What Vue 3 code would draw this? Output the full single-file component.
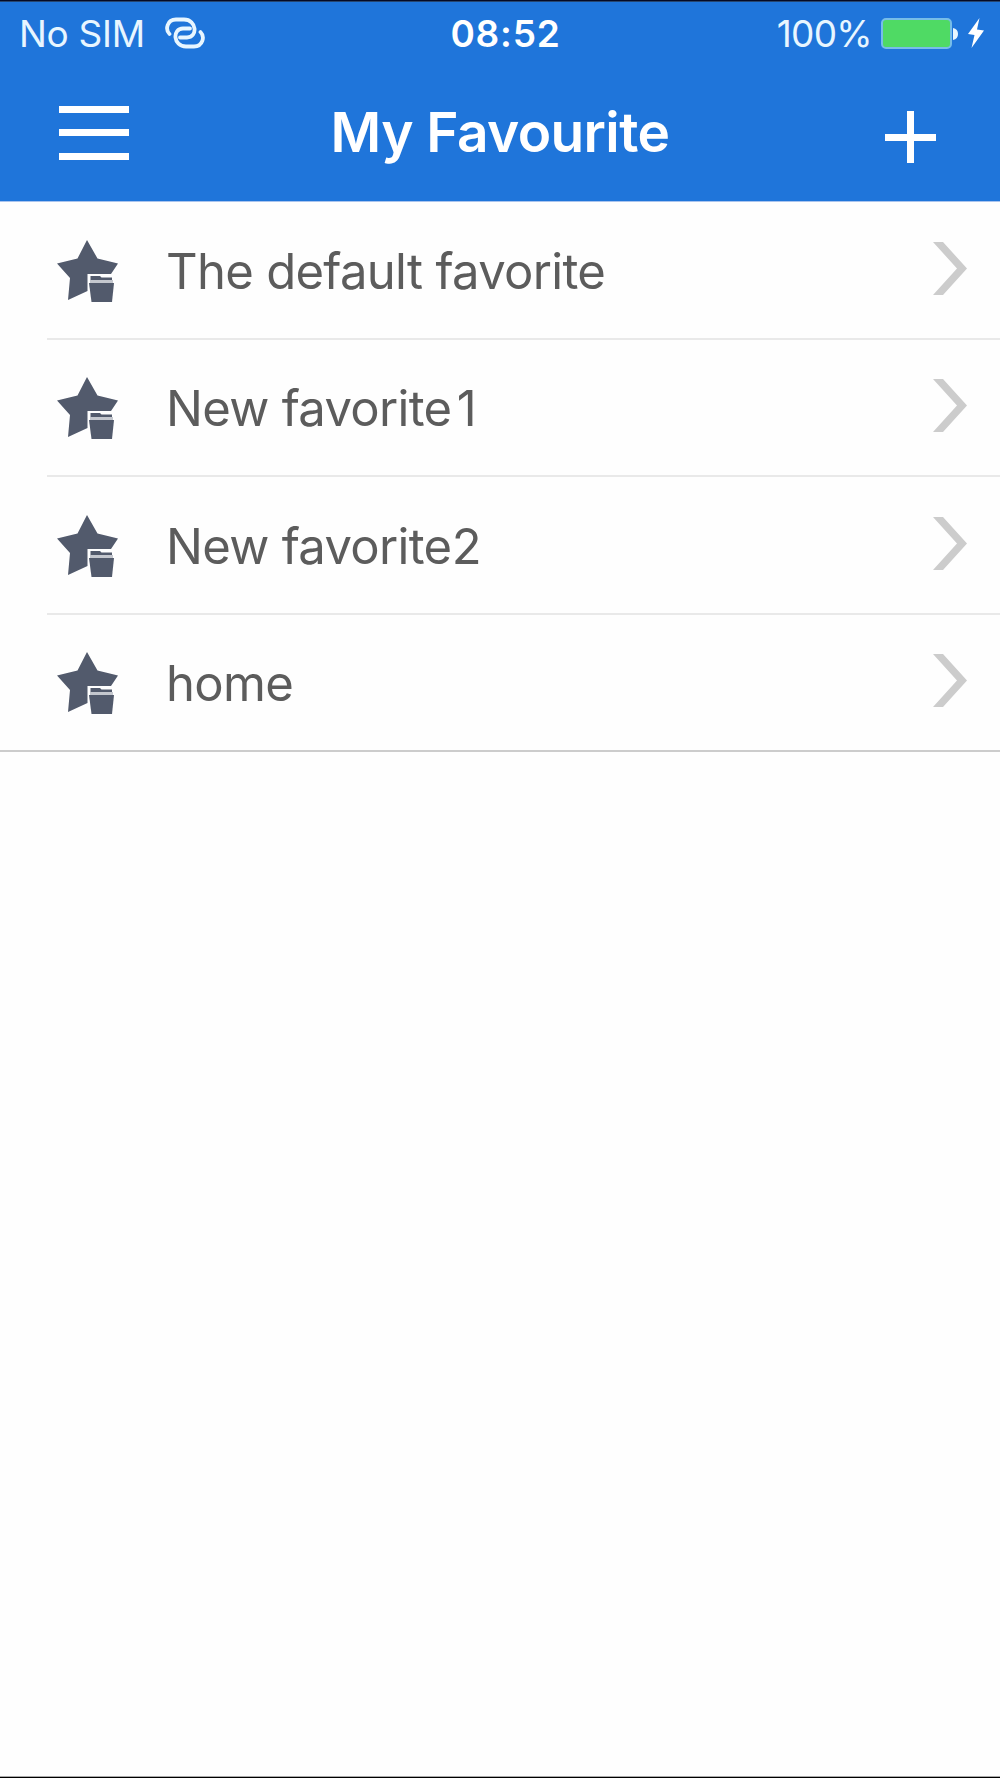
<template>
  <div class="phone">
    <header>
      <div class="status">
        <div class="carrier">
          <span class="sim">No SIM</span>
          <svg class="link" viewBox="0 0 40 32" width="40" height="32">
            <path d="M4.500 17 C0 12.500 2 2.500 11 2.500 H19 C32 2.500 33 20.500 22 20.500 H15" />
            <path d="M35.500 15 C40 19.500 38 29.500 29 29.500 H21 C8 29.500 7 11.500 18 11.500 H25" />
          </svg>
        </div>
        <span class="time">08:52</span>
        <div class="power">
          <span class="percent">100%</span>
          <span class="battery"></span>
          <svg class="knob" viewBox="0 0 5 12" width="5" height="12">
            <path d="M0 0 Q5 1 5 6 Q5 11 0 12 Z" />
          </svg>
          <svg class="bolt" viewBox="0 0 18 30" width="18" height="30">
            <path d="M12.500 0 L1 16 L7.500 17 L4.500 30 L17 12.500 L10 11.500 Z" />
          </svg>
        </div>
      </div>
      <nav>
        <button class="menu" aria-label="Menu">
          <i></i>
          <i></i>
          <i></i>
        </button>
        <h1>{{ title }}</h1>
        <button class="add" aria-label="Add">
          <svg viewBox="0 0 51 52" width="51" height="52">
            <path d="M22 0 H29 V23 H51 V30 H29 V52 H22 V30 H0 V23 H22 Z" />
          </svg>
        </button>
      </nav>
    </header>
    <ul>
      <li v-for="item in favorites" :key="item.name + item.number">
        <svg class="star" viewBox="0 0 62 62" width="62" height="62">
          <path d="M30 0 L40.500 18.500 L61 23.500 L54 34 H30.500 V51 L11 60 L13 38 L0 23.500 L20.500 18.500 Z" />
          <path d="M33.500 36 H43 L44.500 37.500 H55 V40 H33.500 Z" />
          <path class="rim" d="M33 40 H56 V43 H33 Z" />
          <path d="M32 43 H57 L55 62 H34.500 Z" />
        </svg>
        <span class="name">{{ item.name }}<span v-if="item.number" class="number">{{ item.number }}</span></span>
        <svg class="chevron" viewBox="0 0 34 54" width="34" height="54">
          <path d="M0 0 H10 L34 26.500 L10 53 H0 L24 26.500 Z" />
        </svg>
      </li>
    </ul>
  </div>
</template>

<script setup>
import { ref } from "vue";

const title = "My Favourite";
const favorites = ref([
  { name: "The default favorite" },
  { name: "New favorite", number: 1 },
  { name: "New favorite", number: 2 },
  { name: "home" },
]);
</script>

<style>
body {
  background-color: #fefefe;
}
</style>

<style scoped>
.phone {
  box-sizing: border-box;
  width: 1000px;
  height: 1778px;
  border-top: 1px solid #050a24;
  border-bottom: 1px solid #000;
  box-shadow: inset 0 -1px #aaa;
  font-family: Inter, "Liberation Sans", sans-serif;
  overflow: hidden;
}

header {
  box-sizing: border-box;
  height: 201px;
  background-color: #1f75da;
  border-top: 1px solid #25456f;
  border-bottom: 1px solid #a9c4ee;
  color: #fff;
}

.status {
  height: 64px;
  display: grid;
  grid-template-columns: 1fr auto 1fr;
  align-items: center;
  font-size: 37px;
  line-height: 64px;
  color: #e8f6ff;
}

.carrier {
  display: flex;
  align-items: center;
  padding-left: 19px;
}

.sim {
  width: 146px;
  letter-spacing: -0.3px;
}

.link {
  margin-bottom: 2px;
  fill: none;
  stroke: #e8f6ff;
  stroke-width: 3.8;
  stroke-linecap: round;
}

.time {
  font-weight: 600;
  letter-spacing: 0.8px;
  padding-left: 11px;
  color: #fff;
}

.power {
  display: flex;
  align-items: center;
  justify-content: flex-end;
  padding-right: 15px;
}

.percent {
  margin-right: 9px;
  letter-spacing: -0.7px;
}

.battery {
  box-sizing: border-box;
  width: 71px;
  height: 31px;
  margin-bottom: 1px;
  border: 2px solid #77bde8;
  border-radius: 5px;
  background-color: #4fda64;
}

.knob {
  margin-left: 1px;
  margin-right: 9px;
  fill: #e8f6ff;
}

.bolt {
  margin-bottom: 2px;
  fill: #fff;
}

nav {
  height: 133px;
  display: grid;
  grid-template-columns: 1fr auto 1fr;
  align-items: center;
  padding: 0 59px;
}

button {
  border: 0;
  padding: 0;
  background: none;
}

.menu {
  width: 70px;
  display: flex;
  flex-direction: column;
  gap: 16.500px;
}

.menu i {
  height: 7px;
  background-color: #fff;
}

h1 {
  margin: 0;
  font-size: 55px;
  font-weight: 600;
  letter-spacing: -0.6px;
  line-height: 133px;
}

.add {
  justify-self: end;
  margin-right: 5px;
}

.add svg {
  display: block;
  margin-top: 8px;
  fill: #fff;
}

ul {
  list-style-type: none;
  margin: 0;
  padding: 0;
  border-bottom: 2px solid #ccc;
}

li {
  box-sizing: border-box;
  height: 137.500px;
  margin-left: 47px;
  padding: 1px 33px 0 10px;
  display: flex;
  align-items: center;
  border-bottom: 2px solid #e9e9e9;
}

li:last-child {
  height: 135px;
  border-bottom: 0;
}

.star {
  margin-top: 1px;
  fill: #525a6c;
}

.star .rim {
  fill: #c4c7ce;
}

.name {
  flex: 1;
  padding-top: 2px;
  padding-left: 47px;
  font-size: 49px;
  letter-spacing: -0.7px;
  color: #5c5c5c;
}

/* every digit takes the same width */
.number {
  display: inline-block;
  width: 30px;
  text-align: center;
}

.chevron {
  margin-bottom: 3px;
  fill: #ccc;
}
</style>
